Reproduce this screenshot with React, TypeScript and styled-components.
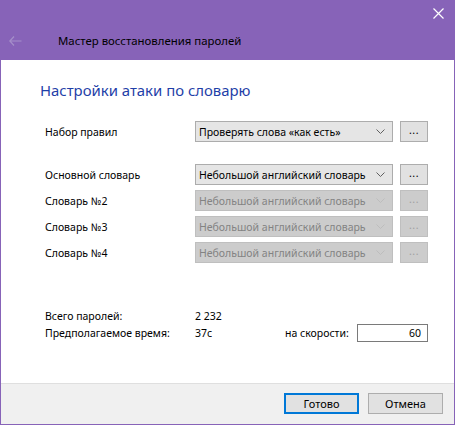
import React from 'react';
import styled, { createGlobalStyle } from 'styled-components';

const GlobalStyle = createGlobalStyle`
  html, body {
    margin: 0;
    padding: 0;
    background: #ffffff;
  }
  body {
    font-family: 'Segoe UI', 'Noto Sans', 'Liberation Sans', sans-serif;
    font-size: 10.5px;
    color: #000000;
  }
`;

const Window = styled.div`
  width: 455px;
  height: 425px;
  box-sizing: border-box;
  display: flex;
  flex-direction: column;
  border: 1px solid #8763b8;
  border-top: none;
  background: #ffffff;
`;

const TitleBar = styled.div`
  height: 60px;
  flex-shrink: 0;
  margin: 0 -1px;
  background: #8763b8;
  display: grid;
  grid-template-rows: 27px 1fr;
  grid-template-columns: 1fr auto;
`;

const CloseBox = styled.div`
  grid-column: 2;
  display: flex;
  align-items: center;
  justify-content: center;
  width: 34px;
`;

const NavRow = styled.div`
  grid-column: 1 / span 2;
  display: flex;
  align-items: center;
  padding: 0 0 6px 9px;
`;

const WindowTitle = styled.div`
  margin-left: 36px;
  font-size: 11.4px;
  color: #000000;
`;

const Content = styled.div`
  flex: 1;
  display: flex;
  flex-direction: column;
  padding: 20px 0 0 0;
`;

const Heading = styled.div`
  padding-left: 39px;
  font-size: 14.9px;
  line-height: 21px;
  color: #1f3fa8;
  margin-bottom: 20px;
`;

const Rows = styled.div<{ $top?: number }>`
  display: flex;
  flex-direction: column;
  gap: 5px;
  margin-top: ${(p) => p.$top ?? 0}px;
  padding-left: 44px;
`;

const Row = styled.div`
  display: grid;
  grid-template-columns: 143px 198px 28px;
  column-gap: 7px;
  align-items: center;
  height: 21px;
`;

const Label = styled.div`
  white-space: nowrap;
`;

const Combo = styled.div<{ $disabled?: boolean }>`
  height: 21px;
  min-width: 0;
  box-sizing: border-box;
  display: flex;
  align-items: center;
  justify-content: space-between;
  padding: 0 7px 0 3px;
  background: ${(p) => (p.$disabled ? '#cccccc' : '#e5e5e5')};
  border: 1px solid ${(p) => (p.$disabled ? '#bfbfbf' : '#acacac')};
  color: ${(p) => (p.$disabled ? '#838383' : '#000000')};
  white-space: nowrap;
  overflow: hidden;
`;

const DotsButton = styled.div<{ $disabled?: boolean }>`
  height: 21px;
  box-sizing: border-box;
  display: flex;
  align-items: center;
  justify-content: center;
  padding-bottom: 3px;
  background: ${(p) => (p.$disabled ? '#cccccc' : '#e1e1e1')};
  border: 1px solid ${(p) => (p.$disabled ? '#bfbfbf' : '#adadad')};
  color: ${(p) => (p.$disabled ? '#a0a0a0' : '#000000')};
  letter-spacing: 0.5px;
`;

const Stats = styled.div`
  margin-top: 45px;
  padding-left: 44px;
  display: grid;
  grid-template-columns: 150px 90px 72px 71px;
  grid-template-rows: 16px 18px;
  align-items: center;
`;

const SpeedInput = styled.div`
  height: 18px;
  box-sizing: border-box;
  border: 1px solid #7a7a7a;
  background: #ffffff;
  display: flex;
  align-items: center;
  justify-content: flex-end;
  padding-right: 6px;
`;

const Footer = styled.div`
  height: 41px;
  flex-shrink: 0;
  box-sizing: border-box;
  background: #f0f0f0;
  border-top: 1px solid #dfdfdf;
  display: flex;
  justify-content: flex-end;
  align-items: flex-start;
  gap: 9px;
  padding: 9px 11px 0 0;
`;

const DialogButton = styled.div<{ $primary?: boolean }>`
  width: 75px;
  height: 21px;
  box-sizing: border-box;
  display: flex;
  align-items: center;
  justify-content: center;
  font-size: 11px;
  background: #e1e1e1;
  border: ${(p) => (p.$primary ? '2px solid #0078d7' : '1px solid #adadad')};
`;

const Chevron = ({ disabled }: { disabled?: boolean }) => (
  <svg width="9" height="5" viewBox="0 0 9 5" style={{ flexShrink: 0 }}>
    <path d="M0.5 0.5 L4.5 4.5 L8.5 0.5" fill="none" stroke={disabled ? '#bdbdbd' : '#606060'} strokeWidth="1" />
  </svg>
);

const dictName = 'Небольшой английский словарь';

export default function App() {
  return (
    <>
      <GlobalStyle />
      <Window>
        <TitleBar>
          <div />
          <CloseBox>
            <svg width="11" height="11" viewBox="0 0 11 11">
              <path d="M0.5 0.5 L10.5 10.5 M10.5 0.5 L0.5 10.5" stroke="#ffffff" strokeWidth="1.2" />
            </svg>
          </CloseBox>
          <NavRow>
            <svg width="13" height="10" viewBox="0 0 13 10">
              <path d="M5 0.5 L0.8 5 L5 9.5 M0.8 5 L12.5 5" fill="none" stroke="#a58fc9" strokeWidth="1.2" />
            </svg>
            <WindowTitle>Мастер восстановления паролей</WindowTitle>
          </NavRow>
        </TitleBar>
        <Content>
          <Heading>Настройки атаки по словарю</Heading>
          <Rows>
            <Row>
              <Label>Набор правил</Label>
              <Combo>
                Проверять слова «как есть»
                <Chevron />
              </Combo>
              <DotsButton>...</DotsButton>
            </Row>
          </Rows>
          <Rows $top={22}>
            <Row>
              <Label>Основной словарь</Label>
              <Combo>
                {dictName}
                <Chevron />
              </Combo>
              <DotsButton>...</DotsButton>
            </Row>
            {['Словарь №2', 'Словарь №3', 'Словарь №4'].map((label) => (
              <Row key={label}>
                <Label>{label}</Label>
                <Combo $disabled>
                  {dictName}
                  <Chevron disabled />
                </Combo>
                <DotsButton $disabled>...</DotsButton>
              </Row>
            ))}
          </Rows>
          <Stats>
            <Label>Всего паролей:</Label>
            <div>2 232</div>
            <div />
            <div />
            <Label>Предполагаемое время:</Label>
            <div>37c</div>
            <Label>на скорости:</Label>
            <SpeedInput>60</SpeedInput>
          </Stats>
        </Content>
        <Footer>
          <DialogButton $primary>Готово</DialogButton>
          <DialogButton>Отмена</DialogButton>
        </Footer>
      </Window>
    </>
  );
}
